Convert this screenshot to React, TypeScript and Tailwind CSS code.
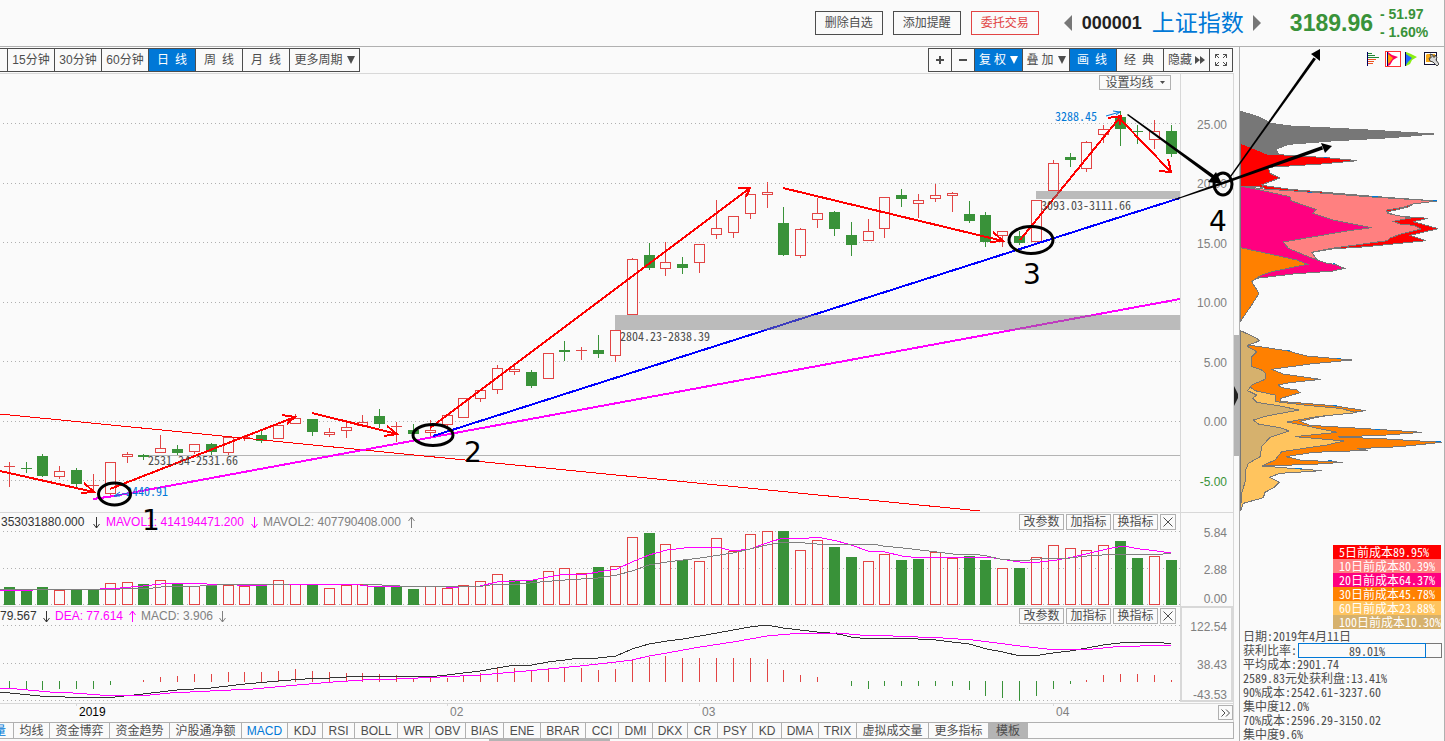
import type { ReactNode } from "react";

type Tone = "r" | "g";

// 收盘方向, 最高, 实体上沿, 实体下沿, 最低
type Candle = [Tone, number, number, number, number];

const candles: Candle[] = [
  ["r", 462, 466, 467, 486],
  ["g", 462, 468, 469, 472],
  ["g", 454, 456, 476, 476],
  ["r", 466, 471, 476, 478],
  ["g", 468, 470, 484, 487],
  ["r", 474, 485, 486, 490],
  ["r", 462, 462, 493, 496],
  ["r", 452, 454, 456, 462],
  ["g", 454, 455, 457, 459],
  ["r", 435, 448, 452, 452],
  ["g", 445, 449, 453, 454],
  ["r", 444, 444, 451, 453],
  ["g", 443, 444, 452, 454],
  ["r", 437, 437, 452, 454],
  ["r", 435, 437, 438, 440],
  ["g", 430, 435, 441, 442],
  ["r", 425, 425, 438, 438],
  ["r", 414, 418, 423, 423],
  ["g", 419, 419, 432, 435],
  ["r", 428, 432, 434, 436],
  ["r", 423, 427, 430, 437],
  ["r", 415, 422, 425, 425],
  ["g", 409, 416, 424, 427],
  ["r", 422, 426, 427, 441],
  ["g", 424, 430, 434, 434],
  ["r", 420, 430, 432, 436],
  ["r", 415, 415, 424, 426],
  ["r", 398, 398, 417, 417],
  ["r", 389, 390, 398, 401],
  ["r", 365, 368, 389, 393],
  ["r", 366, 369, 371, 374],
  ["g", 370, 372, 386, 387],
  ["r", 353, 353, 378, 378],
  ["g", 341, 350, 352, 360],
  ["r", 347, 350, 350, 359],
  ["g", 335, 350, 354, 357],
  ["r", 330, 330, 355, 361],
  ["r", 258, 259, 314, 314],
  ["g", 243, 255, 268, 269],
  ["r", 242, 262, 268, 275],
  ["g", 257, 264, 268, 273],
  ["r", 244, 244, 262, 272],
  ["r", 200, 228, 234, 238],
  ["r", 216, 216, 232, 237],
  ["r", 194, 194, 213, 218],
  ["r", 182, 192, 194, 207],
  ["g", 207, 223, 255, 255],
  ["r", 228, 229, 255, 257],
  ["r", 198, 213, 219, 227],
  ["g", 211, 212, 229, 235],
  ["g", 222, 235, 245, 255],
  ["r", 219, 231, 240, 240],
  ["r", 197, 197, 228, 237],
  ["g", 189, 195, 199, 206],
  ["r", 194, 200, 203, 217],
  ["r", 184, 195, 198, 201],
  ["r", 192, 193, 195, 211],
  ["g", 201, 214, 221, 222],
  ["g", 212, 215, 242, 246],
  ["r", 231, 231, 235, 246],
  ["g", 231, 236, 243, 244],
  ["r", 200, 200, 241, 241],
  ["r", 160, 163, 190, 190],
  ["g", 153, 157, 160, 166],
  ["r", 141, 142, 168, 171],
  ["r", 125, 129, 134, 142],
  ["g", 111, 117, 129, 145],
  ["g", 125, 131, 131, 143],
  ["r", 120, 131, 139, 148],
  ["g", 125, 131, 154, 156],
];

const volumeTones = "gggrggrrgrgrgrrgrrgrrrgggrrrrrggrrrgrrgrgrrrrrgrrggrrggrrggrgrrrrrggrg";

const volumes = [
  587, 590, 587, 590, 590, 590, 583, 582, 584, 580, 583, 586, 585, 585, 586, 585, 580, 584, 584, 588, 585, 584, 586, 586,
  589, 586, 588, 585, 581, 574, 580, 580, 571, 568, 573, 567, 566, 537, 533, 544, 560, 561, 538, 551, 534, 531, 531, 550,
  540, 547, 557, 561, 554, 560, 559, 552, 558, 556, 560, 568, 568, 557, 545, 548, 550, 545, 541, 558, 556, 560,
];

// 0 表示当日没有柱
const macdBars = [
  689, 690, 690, 689, 689, 689, 685, 0, 680, 677, 676, 674, 674, 672, 672, 672, 671, 669, 671, 672, 673, 673, 674, 675,
  678, 678, 678, 675, 673, 668, 668, 670, 668, 668, 668, 670, 669, 660, 657, 656, 658, 658, 658, 658, 658, 659, 670, 675,
  677, 0, 686, 689, 686, 686, 686, 686, 686, 690, 696, 698, 701, 696, 689, 684, 680, 675, 674, 674, 675, 680,
];

const mavol1 =
  "0,590 33,590 50,589 100,589 120,588 143,586 170,583 200,583 207,584 237,585 267,585 283,584 353,584 367,586 437,586 455,588 463,586 480,586 497,582 515,581 533,580 548,577 565,574 587,574 598,572 617,569 632,562 649,555 667,550 693,547 717,547 733,551 750,549 767,543 783,538 802,539 817,537 837,541 851,545 868,551 885,552 902,556 920,558 937,557 987,557 1000,559 1020,562 1040,562 1057,560 1073,557 1090,553 1107,549 1123,546 1140,549 1157,551 1171,553";
const mavol2 =
  "0,589 100,590 120,589 153,588 170,586 200,586 217,585 290,584 363,584 400,586 483,586 497,584 520,584 540,582 565,580 598,578 617,575 632,571 649,565 667,562 700,558 733,553 750,549 767,545 783,542 793,542 817,544 873,544 883,546 903,548 937,552 953,554 973,554 987,556 1000,559 1020,561 1040,559 1070,558 1087,556 1117,554 1163,554 1171,553";
const dif =
  "0,692 20,694 40,696 90,698 115,697 143,694 177,690 211,688 245,684 278,681 305,679 330,678 363,676 437,676 447,675 480,671 497,668 515,665 532,665 548,662 565,660 580,658 598,658 616,656 632,649 649,644 667,641 683,639 700,636 717,633 733,630 750,627 767,625 783,628 800,630 817,632 830,633 843,635 851,637 868,639 885,638 902,638 918,639 936,640 952,642 969,644 987,649 1003,652 1020,656 1040,655 1053,653 1070,651 1087,648 1103,645 1120,643 1133,642 1157,642 1171,644";
const dea =
  "0,688 17,689 50,692 73,693 100,695 150,695 170,693 210,691 253,689 297,685 333,682 363,680 397,679 440,677 480,675 515,672 548,669 580,666 616,662 632,660 649,656 667,653 700,647 733,642 767,636 790,634 837,633 860,635 893,636 943,638 973,640 997,643 1020,646 1047,649 1093,649 1113,647 1140,646 1171,645";

const barX = (i: number) => Math.floor(9.2 + 16.84 * i);
const toneColor = (t: string) => (t === "r" ? "#e24444" : "#399239");

const periods = ["15分钟", "30分钟", "60分钟", "日 线", "周 线", "月 线"];

const tabs = [
  { label: "均线", w: "w-[36px]" },
  { label: "资金博弈", w: "w-[60px]" },
  { label: "资金趋势", w: "w-[60px]" },
  { label: "沪股通净额", w: "w-[72px]" },
  { label: "MACD", w: "w-[46px]" },
  { label: "KDJ", w: "w-[35px]" },
  { label: "RSI", w: "w-[32px]" },
  { label: "BOLL", w: "w-[43px]" },
  { label: "WR", w: "w-[32px]" },
  { label: "OBV", w: "w-[36px]" },
  { label: "BIAS", w: "w-[38px]" },
  { label: "ENE", w: "w-[37px]" },
  { label: "BRAR", w: "w-[45px]" },
  { label: "CCI", w: "w-[33px]" },
  { label: "DMI", w: "w-[34px]" },
  { label: "DKX", w: "w-[35px]" },
  { label: "CR", w: "w-[30px]" },
  { label: "PSY", w: "w-[35px]" },
  { label: "KD", w: "w-[29px]" },
  { label: "DMA", w: "w-[37px]" },
  { label: "TRIX", w: "w-[38px]" },
  { label: "虚拟成交量", w: "w-[72px]" },
  { label: "更多指标", w: "w-[60px]" },
];

const costs = [
  { text: "5日前成本89.95%", bg: "bg-[#ff0000]" },
  { text: "10日前成本80.39%", bg: "bg-[#ff8080]" },
  { text: "20日前成本64.37%", bg: "bg-[#ff0080]" },
  { text: "30日前成本45.78%", bg: "bg-[#ff8000]" },
  { text: "60日前成本23.88%", bg: "bg-[#ffc45e]" },
  { text: "100日前成本10.30%", bg: "bg-[#d6b16d]" },
];

const stats = [
  "平均成本:2901.74",
  "2589.83元处获利盘:13.41%",
  "90%成本:2542.61-3237.60",
  "集中度12.0%",
  "70%成本:2596.29-3150.02",
  "集中度9.6%",
];

function Grid({ ys }: { ys: number[] }) {
  return (
    <g stroke="#b0b0b0" strokeDasharray="1 3" shapeRendering="crispEdges">
      {ys.map((y) => (
        <line key={y} x1="3" x2="1180" y1={y + 0.5} y2={y + 0.5} />
      ))}
    </g>
  );
}

function Axis({ viewBox, className, labels }: { viewBox: string; className: string; labels: [string, number][] }) {
  return (
    <svg className={className} viewBox={viewBox} fontSize="12" textAnchor="end">
      {labels.map(([text, y]) => (
        <text key={text} x="1227" y={y} fill={text === "-5.00" ? "#399239" : "#808080"}>
          {text}
        </text>
      ))}
    </svg>
  );
}

function Arrow({ up = false }: { up?: boolean }) {
  return (
    <svg width="9" height="13" viewBox="0 0 9 13" fill="none" stroke="currentColor">
      {up ? <path d="M4.5 12V1M1.5 5l3-4 3 4" /> : <path d="M4.5 1v11M1.5 8l3 4 3-4" />}
    </svg>
  );
}

function Caret() {
  return (
    <svg width="8" height="8" viewBox="0 0 8 8" fill="currentColor">
      <path d="M0 0h8L4 8z" />
    </svg>
  );
}

function PanelHeader({ children }: { children: ReactNode }) {
  return (
    <div className="flex h-[18px] items-center justify-between pr-[4px]">
      <div className="flex items-center">{children}</div>
      <div className="flex gap-[2px]">
        {["改参数", "加指标", "换指标"].map((label) => (
          <button key={label} className="h-4 w-[45px] border border-[#b0b0b0] leading-[14px]">
            {label}
          </button>
        ))}
        <button aria-label="关闭" className="flex h-4 w-4 items-center justify-center border border-[#b0b0b0]">
          <svg width="10" height="10" viewBox="0 0 10 10" stroke="#4d4d4d">
            <path d="M.5.5l9 9M9.5.5l-9 9" />
          </svg>
        </button>
      </div>
    </div>
  );
}

function PriceChart() {
  return (
    <svg className="h-[438px] w-full" viewBox="0 74 1180 438" preserveAspectRatio="xMaxYMin meet" fill="none">
      <Grid ys={[123, 183, 242, 302, 361, 421, 480]} />
      <g shapeRendering="crispEdges">
        <path d="M143 455.5H1180" stroke="#b4b4b4" />
        {candles.map(([tone, high, top, bottom, low], i) => {
          const x = barX(i);
          const color = toneColor(tone);
          return (
            <g key={i} fill={color}>
              <rect x={x} y={high} width="1" height={low - high + 1} />
              {tone === "r" && bottom - top > 1 ? (
                <rect x={x - 4.5} y={top + 0.5} width="10" height={bottom - top} fill="#fafafa" stroke={color} />
              ) : (
                <rect x={x - 5} y={top} width="11" height={Math.max(bottom - top, 1)} />
              )}
            </g>
          );
        })}
      </g>

      {/* 趋势线 */}
      <g shapeRendering="crispEdges">
        <path d="M0 414L980 511" stroke="#ff0000" />
        <path d="M93 499L114 496 1180 299" stroke="#ff00ff" strokeWidth="2" />
        <path d="M433 436L1180 198" stroke="#0000ff" strokeWidth="2" />
        <g stroke="#ff0000" strokeWidth="2">
          <path d="M0 471L94 492M84 483L94 492L81 493" />
          <path d="M110 489L295 417M282 415L295 417L287 424" />
          <path d="M312 413L397 434M387 426L397 434L384 436" />
          <path d="M430 428L750 188M738 188H750L746 197" />
          <path d="M783 188L1003 241M993 232L1003 241L990 242" />
          <path d="M1020 240L1121 116M1108 118L1121 116L1120 125" />
          <path d="M1121 120L1171 172M1168 159L1171 172L1159 171" />
        </g>
      </g>

      {/* 缺口 */}
      <g fill="#7a7a7a" fillOpacity="0.49">
        <rect x="615" y="315" width="565" height="15" />
        <rect x="1036" y="191" width="144" height="8" />
      </g>

      <g className="font-['Noto_Sans_CJK_SC',sans-serif] [font-feature-settings:'hwid']" fontSize="12" fill="#4d4d4d">
        <text x="148" y="465">2531.34-2531.66</text>
        <text x="620" y="341">2804.23-2838.39</text>
        <text x="1041" y="210">3093.03-3111.66</text>
        <text x="126" y="496" fill="#0078d7">2440.91</text>
        <text x="1055" y="121" fill="#0078d7">3288.45</text>
      </g>
      <path d="M1106 116L1120 112M1113 111l7 1-4 3" stroke="#0078d7" />
      <path d="M128 493L114 496l6-4M114 496h6" stroke="#0078d7" />
    </svg>
  );
}

function VolumeChart() {
  return (
    <svg className="h-[75px] w-full" viewBox="0 531 1180 75" preserveAspectRatio="xMaxYMin meet" fill="none">
      <g shapeRendering="crispEdges">
        <Grid ys={[531, 568, 604]} />
        {volumes.map((y, i) => {
          const x = barX(i);
          return volumeTones[i] === "r" ? (
            <rect key={i} x={x - 4.5} y={y + 0.5} width="10" height={604 - y} fill="#fafafa" stroke="#e24444" />
          ) : (
            <rect key={i} x={x - 5} y={y} width="11" height={605 - y} fill="#399239" />
          );
        })}
        <polyline points={mavol1} stroke="#ff00ff" />
        <polyline points={mavol2} stroke="#808080" />
      </g>
    </svg>
  );
}

function MacdChart() {
  return (
    <svg className="h-[78px] w-full" viewBox="0 625 1180 78" preserveAspectRatio="xMaxYMin meet" fill="none">
      <g shapeRendering="crispEdges">
        <Grid ys={[625, 663, 700]} />
        {macdBars.map((y, i) =>
          y === 0 ? null : (
            <rect
              key={i}
              x={barX(i)}
              y={Math.min(y, 681)}
              width="1"
              height={y < 681 ? 682 - y : y - 681}
              fill={y < 681 ? "#e24444" : "#399239"}
            />
          )
        )}
        <polyline points={dif} stroke="#333333" />
        <polyline points={dea} stroke="#ff00ff" />
      </g>
    </svg>
  );
}

function ChipChart() {
  return (
    <svg
      className="h-[438px] w-full"
      viewBox="120 222 612 1314"
      preserveAspectRatio="xMinYMin meet"
      shapeRendering="crispEdges"
      stroke="#777777"
      strokeWidth="3"
    >
      <polygon fill="#777777" points="120,333 180,352 212,370 272,378 505,390 702,402 575,413 395,423 265,433 228,448 236,464 206,464 122,430" />
      <polygon fill="#ff0000" points="122,430 206,464 236,464 378,473 472,482 365,492 205,502 210,520 240,534 186,554 200,562 122,558" />
      <polygon fill="#ff0000" points="186,556 270,568 530,590 712,603 640,612 628,620 605,626 560,636 590,648 685,655 640,665 715,686 630,706 678,722 500,740 395,747 335,757" />
      <polygon fill="#ff8080" points="122,558 190,567 270,572 530,592 712,603 640,612 608,622 560,630 562,640 588,646 632,654 580,664 600,672 640,676 662,687 622,697 600,703 568,715 562,722 395,745 335,757 350,778 380,792 250,760" />
      <polygon fill="#ff0080" points="122,558 165,567 270,590 272,602 348,628 338,640 400,660 515,683 440,693 250,726 265,745 325,770 380,790 405,793 433,805 400,813 280,822 170,835 122,820" />
      <polygon fill="#ff8000" points="122,743 200,760 290,780 322,793 215,815 185,825 155,845 177,880 155,915 122,963" />
      <g transform="translate(0 780)">
        <polygon fill="#ff8000" points="122,212 170,235 178,243 145,255 260,272 320,288 455,300 330,312 215,328 250,342 362,358 270,368 235,375 245,383 290,390 300,398 240,416 240,424 400,437 497,452 360,470 300,484 330,496 530,508 665,517 560,525 415,531 560,537 725,547 600,560 470,566 505,571 340,577 258,590 300,600 428,607 340,613 185,618 122,600" />
        <polygon fill="#ffc45e" points="122,380 150,380 165,392 225,405 228,425 330,437 420,445 470,458 350,470 262,486 330,500 412,517 285,530 345,535 432,543 380,555 245,575 225,600 185,618 300,627 365,632 240,640 208,652 238,667 222,682 195,697 190,713 130,730 122,752" />
        <polygon fill="#d6b16d" points="122,212 170,235 178,243 145,255 140,258 170,275 155,290 155,320 185,330 197,340 195,358 155,375 143,392 170,405 158,415 170,427 240,438 297,450 200,468 160,480 175,492 240,503 268,513 210,532 185,560 180,590 145,610 137,630 137,660 125,700 122,745" />
      </g>
      <path
        d="M372 473h10M325 577h12M515 590h20M700 602h12M398 791h8M260 1051h10M412 1076h10M398 1217h14M526 1289h14M708 1325h14M385 1382h10M285 1406h20"
        stroke="#0078d7"
      />
    </svg>
  );
}

// 手绘标注, 盖在图表和筹码区之上
function Annotations() {
  return (
    <svg className="pointer-events-none absolute top-0 right-0" width="1444" height="741" viewBox="0 0 1444 741">
      <g fill="none" stroke="#000000" strokeWidth="3">
        <ellipse cx="114.5" cy="494" rx="16" ry="11" />
        <ellipse cx="433" cy="435" rx="20" ry="10.5" />
        <ellipse cx="1031" cy="240" rx="22" ry="13.5" />
        <ellipse cx="1223" cy="184" rx="9" ry="11" />
      </g>
      <path d="M1127 115L1128 114L1218 178L1216 181Z" />
      <path d="M1222 184L1208 182L1216 172Z" />
      <path d="M1175 200L1175 199L1322 146L1323 149.5L1224 184Z" />
      <path d="M1332 146L1321 143L1325 153Z" />
      <path d="M1230 176L1231 177L1316 59L1313.5 57.5Z" />
      <path d="M1320 49L1320 61L1311 54Z" />
      <g className="font-['DejaVu_Sans',sans-serif]" fontSize="28">
        <text x="142" y="530">1</text>
        <text x="464" y="462">2</text>
        <text x="1023" y="284">3</text>
        <text x="1209" y="231">4</text>
      </g>
    </svg>
  );
}

export default function App() {
  return (
    <div className="relative flex min-h-screen flex-col overflow-hidden border-r border-[#b0b0b0] bg-[#fafafa] font-['Liberation_Sans','Noto_Sans_CJK_SC',sans-serif] text-[12px] leading-[14px] whitespace-nowrap text-[#4d4d4d]">
      <header className="flex h-[47px] items-center justify-end border-b border-[#b0b0b0]">
        <div className="flex gap-[10px]">
          <button className="h-6 w-[68px] border border-[#4d4d4d]">删除自选</button>
          <button className="h-6 w-[68px] border border-[#4d4d4d]">添加提醒</button>
          <button className="h-6 w-[68px] border border-[#e24444] text-[#e24444]">委托交易</button>
        </div>
        <button aria-label="上一个" className="ml-[25px]">
          <svg width="8" height="16" viewBox="0 0 8 16" fill="#777777">
            <path d="M8 0v16L0 8z" />
          </svg>
        </button>
        <span className="ml-[10px] text-[18px] leading-[24px] font-bold text-[#222222]">000001</span>
        <span className="ml-[10px] text-[23px] leading-[24px] text-[#0078d7]">上证指数</span>
        <button aria-label="下一个" className="ml-[9px]">
          <svg width="8" height="16" viewBox="0 0 8 16" fill="#777777">
            <path d="M0 0v16l8-8z" />
          </svg>
        </button>
        <span className="ml-[29px] text-[23px] leading-[24px] font-bold text-[#399239]">3189.96</span>
        <div className="ml-[7px] w-[64px] text-[14px] leading-[18px] font-bold text-[#399239]">
          <div>- 51.97</div>
          <div>- 1.60%</div>
        </div>
      </header>

      <div className="flex flex-1">
        <main className="flex min-w-0 flex-1 flex-col">
          {/* 周期与工具 */}
          <div className="flex h-[27px] items-start justify-between border-b border-[#d8d8d8] pt-px pr-px">
            <div className="flex h-6 border-y border-r border-[#4d4d4d]">
              <div className="w-[7px]" />
              {periods.map((p) => (
                <button
                  key={p}
                  className={`flex w-[47px] items-center justify-center gap-[6px] border-l border-[#4d4d4d] ${p === "日 线" ? "bg-[#0078d7] text-white" : ""}`}
                >
                  {p.split(" ").map((part) => (
                    <span key={part}>{part}</span>
                  ))}
                </button>
              ))}
              <button className="flex w-[70px] items-center justify-center gap-1 border-l border-[#4d4d4d]">
                更多周期
                <Caret />
              </button>
            </div>
            <div className="flex h-6 border-y border-r border-[#4d4d4d]">
              <button aria-label="放大" className="flex w-[23px] items-center justify-center border-l border-[#4d4d4d]">
                <svg width="8" height="8" viewBox="0 0 8 8" fill="#4d4d4d">
                  <path d="M3 0h2v3h3v2H5v3H3V5H0V3h3z" />
                </svg>
              </button>
              <button aria-label="缩小" className="flex w-[23px] items-center justify-center border-l border-[#4d4d4d]">
                <svg width="8" height="8" viewBox="0 0 8 8" fill="#4d4d4d">
                  <path d="M0 3h8v2H0z" />
                </svg>
              </button>
              <button className="flex w-[48px] items-center justify-center gap-[4px] border-l border-[#4d4d4d] bg-[#0078d7] text-white">
                <span className="flex gap-[3px]">
                  <span>复</span>
                  <span>权</span>
                </span>
                <Caret />
              </button>
              <button className="flex w-[47px] items-center justify-center gap-[4px] border-l border-[#4d4d4d]">
                <span className="flex gap-[3px]">
                  <span>叠</span>
                  <span>加</span>
                </span>
                <Caret />
              </button>
              <button className="flex w-[47px] items-center justify-center gap-[6px] border-l border-[#4d4d4d] bg-[#0078d7] pr-[2px] text-white">
                <span>画</span>
                <span>线</span>
              </button>
              <button className="flex w-[47px] items-center justify-center gap-[6px] border-l border-[#4d4d4d] pr-[2px]">
                <span>经</span>
                <span>典</span>
              </button>
              <button className="flex w-[46px] items-center justify-center gap-[3px] border-l border-[#4d4d4d]">
                隐藏
                <svg width="10" height="8" viewBox="0 0 10 8" fill="#4d4d4d">
                  <path d="M0 0l5 4-5 4zM5 0l5 4-5 4z" />
                </svg>
              </button>
              <button aria-label="全屏" className="flex w-[23px] items-center justify-center border-l border-[#4d4d4d]">
                <svg width="12" height="12" viewBox="0 0 12 12" fill="none" stroke="#4d4d4d">
                  <path d="M.5 4V.5H4M8 .5h3.5V4M11.5 8v3.500H8M4 11.5H.5V8M.5.5L4 4M11.5.5L8 4M11.5 11.5L8 8M.5 11.5L4 8" />
                </svg>
              </button>
            </div>
          </div>

          {/* K线 */}
          <section className="flex border-r border-b border-[#d8d8d8]">
            <div className="relative min-w-0 flex-1">
              <PriceChart />
              <button className="absolute top-px right-[9px] flex h-[15px] w-[72px] items-center justify-center gap-[6px] border border-[#b0b0b0] bg-[#fafafa]">
                设置均线
                <svg width="5" height="3" viewBox="0 0 5 3" fill="#4d4d4d">
                  <path d="M0 0h5L2.5 3z" />
                </svg>
              </button>
            </div>
            <Axis
              viewBox="1181 74 52 438"
              className="h-[438px] w-[53px] border-l border-[#d8d8d8]"
              labels={[
                ["25.00", 129],
                ["20.00", 188],
                ["15.00", 248],
                ["10.00", 307],
                ["5.00", 367],
                ["0.00", 426],
                ["-5.00", 486],
              ]}
            />
          </section>

          {/* 成交量 */}
          <section className="flex border-r border-b border-[#d8d8d8]">
            <div className="min-w-0 flex-1">
              <PanelHeader>
                <span className="flex w-[106px] items-center gap-[8px] pl-px text-[#333333]">
                  353031880.000 <Arrow />
                </span>
                <span className="flex w-[157px] items-center gap-[6px] text-[#ff00ff]">
                  MAVOL1: 414194471.200 <Arrow />
                </span>
                <span className="flex items-center gap-[6px] text-[#808080]">
                  MAVOL2: 407790408.000 <Arrow up />
                </span>
              </PanelHeader>
              <VolumeChart />
            </div>
            <Axis
              viewBox="1181 513 52 93"
              className="h-[93px] w-[53px] border-l border-[#d8d8d8]"
              labels={[
                ["5.84", 537],
                ["2.88", 574],
                ["0.00", 603],
              ]}
            />
          </section>

          {/* MACD */}
          <section className="flex border-r border-b border-[#d8d8d8]">
            <div className="min-w-0 flex-1">
              <PanelHeader>
                <span className="flex w-[55px] items-center gap-[5px] text-[#333333]">
                  79.567 <Arrow />
                </span>
                <span className="flex w-[86px] items-center gap-[5px] text-[#ff00ff]">
                  DEA: 77.614 <Arrow up />
                </span>
                <span className="flex items-center gap-[5px] text-[#808080]">
                  MACD: 3.906 <Arrow />
                </span>
              </PanelHeader>
              <MacdChart />
            </div>
            <Axis
              viewBox="1182 608 49 92"
              className="h-[95px] w-[53px] border-2 border-t border-[#d8d8d8]"
              labels={[
                ["122.54", 631],
                ["38.43", 669],
                ["-43.53", 699],
              ]}
            />
          </section>

          {/* 日期 */}
          <div className="flex h-[18px] border-r border-[#d8d8d8]">
            <svg
              className="h-[18px] min-w-0 flex-1"
              viewBox="0 704 1218 18"
              preserveAspectRatio="xMaxYMin meet"
              fontSize="12"
              fill="#808080"
            >
              <path d="M76.5 704v2M447.5 704v2M699.5 704v2M1053.5 704v2" stroke="#d8d8d8" />
              <text x="79" y="716" fill="#000000">
                2019
              </text>
              <text x="450" y="716">
                02
              </text>
              <text x="702" y="716">
                03
              </text>
              <text x="1056" y="716">
                04
              </text>
            </svg>
            <button aria-label="更多" className="mt-px flex h-[15px] w-[15px] items-center justify-center border border-[#b0b0b0]">
              <svg width="9" height="8" viewBox="0 0 9 8" fill="none" stroke="#4d4d4d">
                <path d="M.5.5L4 4 .5 7.5M5 .5L8.5 4 5 7.5" />
              </svg>
            </button>
          </div>

          {/* 指标 */}
          <nav className="flex h-[17px] overflow-hidden border-y border-r border-[#b0b0b0]">
            <button className="flex w-[13px] items-center justify-end overflow-hidden pr-[7px] text-[#0078d7]">量</button>
            {tabs.map((t) => (
              <button
                key={t.label}
                className={`shrink-0 border-l border-[#b0b0b0] ${t.w} ${t.label === "MACD" ? "text-[#0078d7]" : ""}`}
              >
                {t.label}
              </button>
            ))}
            <button className="w-[40px] bg-[#b4b4b4]">模板</button>
          </nav>
          <div className="ml-[489px] h-[2px] w-[121px] bg-[#b4b4b4]" />
        </main>

        <div className="flex w-[5px] flex-col pt-[288px]">
          <div className="flex h-[121px] items-center bg-[#b4b4b4]">
            <svg width="5" height="20" viewBox="0 0 5 20" fill="#222222">
              <path d="M0 0l4 8v4L0 20z" />
            </svg>
          </div>
        </div>

        {/* 筹码分布 */}
        <aside className="w-[205px] border-l border-[#b0b0b0]">
          <div className="flex h-[27px] items-start justify-end gap-[3px] pt-[4px] pr-[5px]">
            <button aria-label="筹码分布">
              <svg width="16" height="16" viewBox="0 0 16 16" shapeRendering="crispEdges">
                <path d="M1.5 1v14" stroke="#000060" />
                <path d="M2 2.5h4M2 4.5h7M2 6.5h11" stroke="#228833" />
                <path d="M2 8.5h8M2 10.5h6M2 12.5h5" stroke="#ee5522" />
              </svg>
            </button>
            <button aria-label="火焰山">
              <svg width="16" height="16" viewBox="0 0 16 16">
                <rect x=".5" y=".5" width="15" height="15" fill="#ffffff" stroke="#ff3333" />
                <path d="M3 1l4 3 6 2-5 3-3 5-2 1z" fill="#ff0060" />
                <path d="M3 3l5 4-3 4-2 2z" fill="#ffa000" />
                <path d="M2.5 1v14" stroke="#000060" />
              </svg>
            </button>
            <button aria-label="活跃度">
              <svg width="16" height="16" viewBox="0 0 16 16">
                <path d="M2 1l5 2 6 3-5 3-2 4-4 2z" fill="#88ee11" />
                <path d="M2 3l6 4-4 4-2 3z" fill="#2266ff" />
                <path d="M1.5 1v14" stroke="#000060" />
              </svg>
            </button>
            <button aria-label="设置">
              <svg width="16" height="16" viewBox="0 0 16 16">
                <rect x="1.5" y="1.5" width="12" height="12" fill="#ffffff" stroke="#111133" />
                <path d="M3 4l1-1h8v7l-2 1H3z" fill="#f5a818" />
                <path d="M7 3l3 1v2h2V4l2 2-1 3 3 4-2 2-4-4-3-1-1-3h2V5z" fill="#d8d8d8" stroke="#444444" />
              </svg>
            </button>
          </div>
          <ChipChart />
          <div className="font-['Noto_Sans_CJK_SC',sans-serif] [font-feature-settings:'hwid']">
            <ul className="mt-[33px] mr-[3px] ml-auto w-[108px] text-white">
              {costs.map((c) => (
                <li key={c.text} className={`h-[14px] pl-[6px] ${c.bg}`}>
                  {c.text}
                </li>
              ))}
            </ul>
            <div className="pl-[3px]">
              <div>日期:2019年4月11日</div>
              <div className="flex h-[14px] items-center">
                获利比率:
                <div className="ml-px flex h-[15px] w-[144px] border border-[#777777]">
                  <div className="-m-px w-[90%] border border-[#0078d7] pl-[10px] text-center leading-[13px]">89.01%</div>
                </div>
              </div>
              {stats.map((s) => (
                <div key={s}>{s}</div>
              ))}
            </div>
          </div>
        </aside>
      </div>

      <Annotations />
    </div>
  );
}
